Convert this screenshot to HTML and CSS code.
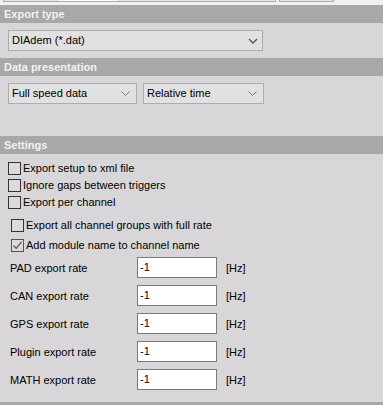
FILE: index.html
```html
<!DOCTYPE html>
<html>
<head>
<meta charset="utf-8">
<link rel="stylesheet" href="styles.css">
</head>
<body>
<div class="topstrip">
  <div class="ctl ctl-a"><div class="ctl-white"></div></div>
  <div class="ctl ctl-b"></div>
</div>

<div class="sec-head">Export type</div>
<div class="sec-body body-export">
  <div class="combo combo-wide"><span>DIAdem (*.dat)</span><svg class="chev" width="10" height="6" viewBox="0 0 10 6"><path d="M1 1 L5 5 L9 1" fill="none" stroke="#555" stroke-width="1.3"/></svg></div>
</div>

<div class="sec-head">Data presentation</div>
<div class="sec-body body-data">
  <div class="combo-row">
    <div class="combo combo-a"><span>Full speed data</span><svg class="chev" width="9" height="5" viewBox="0 0 9 5"><path d="M0.5 0.5 L4.5 4.5 L8.5 0.5" fill="none" stroke="#777" stroke-width="1"/></svg></div>
    <div class="combo combo-b"><span>Relative time</span><svg class="chev" width="9" height="5" viewBox="0 0 9 5"><path d="M0.5 0.5 L4.5 4.5 L8.5 0.5" fill="none" stroke="#777" stroke-width="1"/></svg></div>
  </div>
</div>

<div class="sec-head">Settings</div>
<div class="sec-body body-settings">
  <div class="checks group1">
    <label class="chk"><span class="box"></span>Export setup to xml file</label>
    <label class="chk"><span class="box"></span>Ignore gaps between triggers</label>
    <label class="chk"><span class="box"></span>Export per channel</label>
  </div>
  <div class="checks group2">
    <label class="chk"><span class="box"></span>Export all channel groups with full rate</label>
    <label class="chk"><span class="box checked"><svg width="11" height="11" viewBox="0 0 11 11"><path d="M1.5 5.5 L4.2 8.3 L9.5 1.8" fill="none" stroke="#555" stroke-width="1.2"/></svg></span>Add module name to channel name</label>
  </div>
  <div class="rates">
    <div class="rate"><span class="rlabel">PAD export rate</span><span class="inp">-1</span><span class="unit">[Hz]</span></div>
    <div class="rate"><span class="rlabel">CAN export rate</span><span class="inp">-1</span><span class="unit">[Hz]</span></div>
    <div class="rate"><span class="rlabel">GPS export rate</span><span class="inp">-1</span><span class="unit">[Hz]</span></div>
    <div class="rate"><span class="rlabel">Plugin export rate</span><span class="inp">-1</span><span class="unit">[Hz]</span></div>
    <div class="rate"><span class="rlabel">MATH export rate</span><span class="inp">-1</span><span class="unit">[Hz]</span></div>
  </div>
</div>
<div class="bottom-band"></div>
</body>
</html>
```

FILE: styles.css
```css
* { box-sizing: border-box; }
html, body { margin: 0; padding: 0; }
body {
  width: 383px;
  height: 405px;
  overflow: hidden;
  background: #d8d6d9;
  font-family: Tahoma, "Liberation Sans", "DejaVu Sans", sans-serif;
  font-size: 11px;
  color: #000;
}
.topstrip {
  height: 5px;
  background: #f0f0f0;
  display: flex;
  gap: 3px;
  padding-left: 3px;
}
.ctl {
  height: 2px;
  border: 1px solid #adadad;
  border-top: none;
  background: #e6e6e6;
}
.ctl-a { width: 273px; }
.ctl-white { margin-left: 54px; width: 60px; height: 1px; background: #fff; }
.ctl-b { width: 55px; }

.sec-head {
  height: 18px;
  background: #a8a8a8;
  color: #f2f2f2;
  font-weight: bold;
  padding-left: 4px;
  line-height: 18px;
}
.sec-body { padding: 0 8px; }
.body-export { padding-top: 7px; height: 35px; }
.body-data { padding-top: 7px; height: 60px; }

.combo {
  height: 21px;
  background: #e1e1e1;
  border: 1px solid #adadad;
  display: flex;
  align-items: center;
  justify-content: space-between;
  padding: 0 6px 0 3px;
  line-height: 19px;
}
.combo-wide { width: 255px; padding-right: 4px; }
.combo-row { display: flex; gap: 6px; }
.combo-a { width: 129px; }
.combo-b { width: 121px; }

.body-settings { padding-top: 8px; }
.checks { display: flex; flex-direction: column; }
.group1 { gap: 4px; }
.group2 { padding-left: 3px; margin-top: 10px; gap: 7px; }
.chk {
  display: flex;
  align-items: center;
  height: 13px;
  line-height: 13px;
}
.box {
  width: 13px;
  height: 13px;
  border: 1px solid #333;
  background: #dcdadc;
  margin-right: 2px;
  display: flex;
  align-items: center;
  justify-content: center;
  flex: none;
}
.box.checked { border-color: #555; }

.rates { margin-top: 5px; display: flex; flex-direction: column; gap: 7px; padding-left: 2px; }
.rate { display: flex; align-items: center; height: 21px; }
.rlabel { width: 127px; }
.inp {
  width: 80px;
  height: 21px;
  background: #fff;
  border: 1px solid #7a7a7a;
  padding-left: 2px;
  line-height: 19px;
}
.unit { margin-left: 9px; }

.bottom-band {
  position: absolute;
  left: 0;
  top: 402px;
  width: 383px;
  height: 3px;
  background: #a8a8a8;
}
```
